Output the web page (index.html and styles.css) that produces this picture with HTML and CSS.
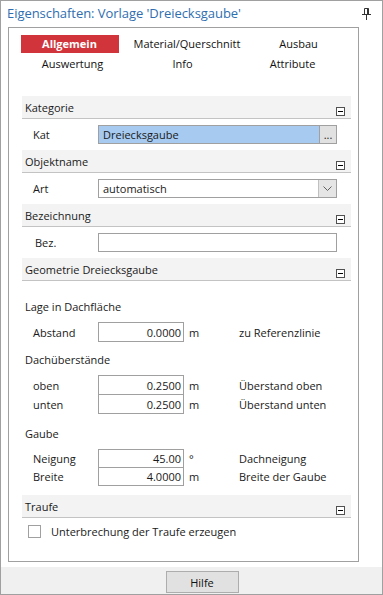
FILE: index.html
```html
<!DOCTYPE html>
<html lang="de">
<head>
<meta charset="utf-8">
<title>Eigenschaften</title>
<link rel="stylesheet" href="styles.css">
</head>
<body>
<div class="window">
  <div class="titlebar">
    <span class="title">Eigenschaften: Vorlage 'Dreiecksgaube'</span>
    <svg class="pin" width="9" height="12" viewBox="0 0 9 12">
      <path d="M2.5 0.5H6.5V6.5H2.5Z" fill="none" stroke="#333" stroke-width="1"/>
      <rect x="5" y="0.5" width="1.5" height="6" fill="#333"/>
      <rect x="0" y="6" width="9" height="1" fill="#333"/>
      <rect x="4" y="7" width="1" height="5" fill="#333"/>
    </svg>
  </div>
  <div class="main">
    <div class="panel">
      <div class="tabs">
        <div class="tab active">Allgemein</div>
        <div class="tab">Material/Querschnitt</div>
        <div class="tab tab-r">Ausbau</div>
        <div class="tab tab-l">Auswertung</div>
        <div class="tab">Info</div>
        <div class="tab tab-l">Attribute</div>
      </div>
      <div class="props">
        <div class="group-head"><span class="head-text">Kategorie</span><span class="collapse"></span></div>
        <div class="row">
          <span class="label">Kat</span>
          <div class="field selected"><span class="value">Dreiecksgaube</span><span class="dots">...</span></div>
        </div>

        <div class="group-head"><span class="head-text">Objektname</span><span class="collapse"></span></div>
        <div class="row">
          <span class="label">Art</span>
          <div class="field combo"><span class="value">automatisch</span>
            <span class="drop"><svg width="9" height="5" viewBox="0 0 9 5"><path d="M0.5 0.5L4.5 4.5L8.5 0.5" fill="none" stroke="#606060" stroke-width="1"/></svg></span>
          </div>
        </div>

        <div class="group-head"><span class="head-text">Bezeichnung</span><span class="collapse"></span></div>
        <div class="row">
          <span class="label lbl-bez">Bez.</span>
          <div class="field"></div>
        </div>

        <div class="group-head"><span class="head-text">Geometrie Dreiecksgaube</span><span class="collapse"></span></div>
        <div class="geo">
          <div class="sub sub-lage">Lage in Dachfläche</div>
          <div class="nrow first">
            <span class="label">Abstand</span><span class="num">0.0000</span><span class="unit">m</span><span class="desc">zu Referenzlinie</span>
          </div>
          <div class="sub sub-dach">Dachüberstände</div>
          <div class="nrow first">
            <span class="label">oben</span><span class="num">0.2500</span><span class="unit">m</span><span class="desc">Überstand oben</span>
          </div>
          <div class="nrow next">
            <span class="label">unten</span><span class="num">0.2500</span><span class="unit">m</span><span class="desc">Überstand unten</span>
          </div>
          <div class="sub sub-gaube">Gaube</div>
          <div class="nrow first short">
            <span class="label">Neigung</span><span class="num">45.00</span><span class="unit">°</span><span class="desc">Dachneigung</span>
          </div>
          <div class="nrow next short">
            <span class="label">Breite</span><span class="num">4.0000</span><span class="unit">m</span><span class="desc">Breite der Gaube</span>
          </div>
        </div>

        <div class="group-head"><span class="head-text">Traufe</span><span class="collapse"></span></div>
        <div class="check-row">
          <span class="checkbox"></span>
          <span class="check-label">Unterbrechung der Traufe erzeugen</span>
        </div>
      </div>
    </div>
  </div>
  <div class="footer">
    <button class="btn">Hilfe</button>
  </div>
</div>
</body>
</html>
```
FILE: styles.css
```css
* { box-sizing: border-box; }
html, body { margin: 0; padding: 0; background: #fff; }
body {
  font-family: "Open Sans", "Noto Sans", sans-serif;
  font-size: 11px;
  color: #1a1a1a;
}
.window {
  width: 383px;
  height: 595px;
  border: 1px solid #a0a0a0;
  background: #fff;
  display: flex;
  flex-direction: column;
}
.titlebar {
  height: 26px;
  display: flex;
  align-items: center;
  padding: 0 11px 2px 6px;
  justify-content: space-between;
}
.title {
  color: #2f6eb0;
  font-size: 13px;
  letter-spacing: -0.05px;
}
.pin { margin-top: 2px; }
.main {
  padding: 0 23px 0 7px;
}
.panel {
  height: 535px;
  border: 1px solid #a0a0a0;
  background: #fff;
}
.tabs {
  display: grid;
  grid-template-columns: 113px 113px 113px;
  row-gap: 2px;
  padding-left: 4px;
  margin-top: 7px;
  justify-items: center;
}
.tab {
  width: 98px;
  height: 18px;
  line-height: 18px;
  text-align: center;
  white-space: nowrap;
  color: #111;
}
.tab-l { padding-left: 6px; }
.tab-r { padding-left: 6px; }
.tab-l:last-child { padding-left: 0; padding-right: 6px; }
.tab.active {
  background: #d1343a;
  color: #fff;
  font-weight: 700;
}
.props {
  margin-top: 23px;
  padding: 0 7px 0 13px;
}
.group-head {
  height: 23px;
  background: #f3f3f3;
  border-bottom: 1px solid #c3c3c3;
  display: flex;
  justify-content: space-between;
  align-items: flex-start;
  padding: 4px 6px 0 3px;
}
.head-text { line-height: 16px; }
.collapse {
  width: 9px;
  height: 9px;
  border: 1px solid #505050;
  background: #fff;
  align-self: flex-end;
  margin-bottom: 2px;
  position: relative;
}
.collapse::after {
  content: "";
  position: absolute;
  left: 1px;
  top: 3px;
  width: 5px;
  height: 1px;
  background: #000;
}
.row {
  height: 31px;
  display: flex;
  align-items: center;
  padding-left: 11px;
}
.label {
  width: 65px;
  flex: none;
}
.lbl-bez { padding-left: 2px; }
.field {
  width: 239px;
  height: 19px;
  border: 1px solid #a0a0a0;
  background: #fff;
  display: flex;
  align-items: center;
}
.value { padding-left: 4px; flex: 1; }
.field.selected { background: #a6caf0; }
.dots {
  width: 18px;
  height: 19px;
  margin: -1px -1px -1px 0;
  border: 1px solid #a0a0a0;
  background: #e1e1e1;
  text-align: center;
  line-height: 17px;
  color: #222;
}
.drop {
  width: 18px;
  height: 17px;
  border-left: 1px solid #c0c0c0;
  background: #e5e5e5;
  display: flex;
  align-items: center;
  justify-content: center;
}
.geo { padding-bottom: 9px; }
.sub {
  height: 16px;
  line-height: 16px;
  padding-left: 3px;
}
.sub-lage { margin-top: 18px; }
.sub-dach { margin-top: 10px; }
.sub-gaube { margin-top: 12px; }
.nrow {
  height: 20px;
  display: flex;
  align-items: center;
  padding-left: 11px;
}
.nrow.short { height: 19px; }
.nrow.first { margin-top: 7px; }
.nrow.next { margin-top: -1px; }
.num {
  width: 86px;
  height: 100%;
  border: 1px solid #a0a0a0;
  padding-right: 2px;
  display: flex;
  align-items: center;
  justify-content: flex-end;
}
.unit {
  width: 55px;
  padding-left: 5px;
}
.check-row {
  display: flex;
  align-items: center;
  margin-top: 7px;
  padding-left: 6px;
  height: 13px;
}
.checkbox {
  width: 13px;
  height: 13px;
  border: 1px solid #a0a0a0;
  background: #fff;
  margin-right: 10px;
}
.footer {
  margin-top: 5px;
  flex: 1;
  background: #f0f0f0;
  display: flex;
  justify-content: center;
  align-items: flex-start;
  padding-top: 4px;
}
.btn {
  width: 73px;
  height: 22px;
  background: #e1e1e1;
  border: 1px solid #adadad;
  font-family: inherit;
  font-size: 11px;
  color: #111;
  margin-left: 21px;
  padding: 0;
}
```
